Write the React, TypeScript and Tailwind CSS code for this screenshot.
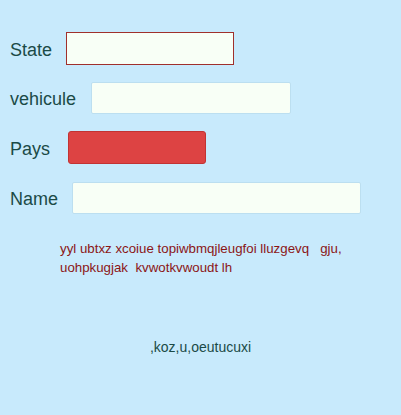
const App = () => {
  return (
    <div className="min-h-[415px] w-full bg-[#c8eafc] font-['Liberation_Sans',Arial,sans-serif] pt-[32px]">
      <div className="flex flex-col gap-[17px] pl-[10px]">
        <div className="flex items-center h-[33px]">
          <label className="pt-[3px] text-[18px] text-[#1b4a47]">State</label>
          <input className="ml-[14px] w-[168px] h-[33px] bg-[#f8fff6] border border-[#a0302c] outline-none" />
        </div>
        <div className="flex items-center h-[32px]">
          <label className="pt-[3px] text-[18px] text-[#1b4a47]">vehicule</label>
          <input className="ml-[15px] w-[200px] h-[32px] bg-[#f8fff6] border border-[#bcdff0] rounded-[2px] outline-none" />
        </div>
        <div className="flex items-center h-[33px]">
          <label className="pt-[3px] text-[18px] text-[#1b4a47]">Pays</label>
          <div className="ml-[18px] w-[138px] h-[33px] bg-[#dd4343] border border-[#c23333] rounded-[3px]" />
        </div>
        <div className="flex items-center h-[33px]">
          <label className="pt-[3px] text-[18px] text-[#1b4a47]">Name</label>
          <input className="ml-[14px] w-[289px] h-[32px] bg-[#f8fff6] border border-[#bcdff0] rounded-[2px] outline-none" />
        </div>
      </div>
      <p className="mt-[25px] ml-[60px] w-[290px] text-[13.3px] leading-[19px] text-[#8b1616] whitespace-pre-wrap">
        {"yyl ubtxz xcoiue topiwbmqjleugfoi lluzgevq   gju, uohpkugjak  kvwotkvwoudt lh"}
      </p>
      <p className="mt-[60px] text-center text-[14px] text-[#1b4a47]">,koz,u,oeutucuxi</p>
    </div>
  );
};

export default App;
